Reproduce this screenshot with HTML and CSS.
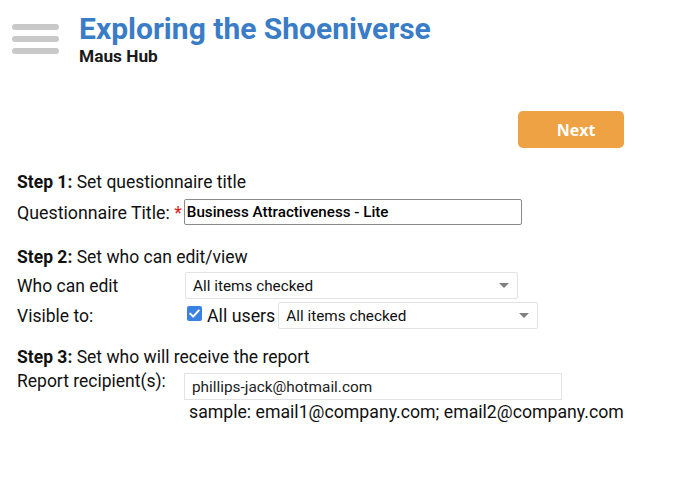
FILE: index.html
```html
<!DOCTYPE html>
<html>
<head>
<meta charset="utf-8">
<link rel="stylesheet" href="styles.css">
</head>
<body>
<header class="header">
  <div class="menu"><span></span><span></span><span></span></div>
  <div class="titles">
    <h1 class="title">Exploring the Shoeniverse</h1>
    <div class="subtitle">Maus Hub</div>
  </div>
</header>
<div class="actions"><button class="next">Next</button></div>
<section class="step step1">
  <div class="step-head"><b>Step 1:</b> Set questionnaire title</div>
  <div class="row">
    <label class="lbl-inline">Questionnaire Title: <span class="req">*</span></label>
    <input class="title-input" type="text" value="Business Attractiveness - Lite">
  </div>
</section>
<section class="step step2">
  <div class="step-head"><b>Step 2:</b> Set who can edit/view</div>
  <div class="row row-edit">
    <label class="lbl">Who can edit</label>
    <div class="select sel-edit"><span>All items checked</span><i class="caret"></i></div>
  </div>
  <div class="row row-vis">
    <label class="lbl">Visible to:</label>
    <span class="check"><svg width="15" height="15" viewBox="0 0 15 15"><rect width="15" height="15" rx="2" fill="#3b82e0"/><path d="M3.2 7.6 L6.2 10.6 L11.8 4.4" stroke="#fff" stroke-width="2" fill="none" stroke-linecap="round" stroke-linejoin="round"/></svg></span>
    <span class="allusers">All users</span>
    <div class="select sel-vis"><span>All items checked</span><i class="caret"></i></div>
  </div>
</section>
<section class="step step3">
  <div class="step-head"><b>Step 3:</b> Set who will receive the report</div>
  <div class="row row-email">
    <label class="lbl">Report recipient(s):</label>
    <div class="email">phillips-jack@hotmail.com</div>
  </div>
  <div class="sample">sample: email1@company.com; email2@company.com</div>
</section>
</body>
</html>
```
FILE: styles.css
```css
html, body { margin: 0; padding: 0; background: #fff; }
body { font-family: Roboto, "Liberation Sans", sans-serif; color: #111; font-size: 17.5px; }
.header { display: flex; align-items: flex-start; padding: 12px 0 0 12px; height: 64px; }
.menu { display: flex; flex-direction: column; gap: 6px; margin-top: 12px; }
.menu span { display: block; width: 47px; height: 6px; border-radius: 3px; background: #c9c9c9; }
.titles { margin-left: 20px; }
.title { margin: 0; font-size: 30px; line-height: 33px; font-weight: 700; color: #3a7dc6; }
.subtitle { font-size: 17.3px; font-weight: 700; line-height: 16px; color: #1a1a1a; margin-top: 3px; }
.actions { display: flex; justify-content: flex-end; padding-right: 64px; margin-top: 35px; }
.next { width: 106px; height: 37px; border: none; border-radius: 5px; background: #eea243; color: #fff; font-family: "Open Sans", sans-serif; font-weight: 700; font-size: 16px; padding: 0 0 0 10px; }
.step { padding-left: 17px; }
.step-head { line-height: 20px; }
.step-head b { font-weight: 700; }
.row { display: flex; align-items: center; }
.step1 { margin-top: 24px; }
.step1 .row { margin-top: 7px; }
.lbl-inline { white-space: pre; font-size: 17.8px; }
.req { color: #e02020; }
.title-input { box-sizing: border-box; width: 338px; height: 26px; margin-left: 2px; border: 1px solid #8a8a8a; border-radius: 2px; padding: 0 2px; font-family: Roboto, sans-serif; font-size: 15.2px; font-weight: 500; color: #000; }
.step2 { margin-top: 22px; }
.lbl { width: 168px; flex: none; }
.select { box-sizing: border-box; display: flex; align-items: center; justify-content: space-between; height: 27px; border: 1px solid #e3e3e3; border-radius: 2px; padding: 0 8px 0 7px; font-size: 15.3px; color: #111; }
.caret { width: 0; height: 0; border-left: 5px solid transparent; border-right: 5px solid transparent; border-top: 5px solid #808080; }
.row-edit { margin-top: 5px; }
.sel-edit { width: 333px; }
.row-vis { margin-top: 3px; }
.check { display: flex; margin-left: 2px; margin-top: -5px; }
.allusers { margin-left: 5px; font-size: 17.8px; }
.sel-vis { width: 260px; margin-left: 3px; }
.step3 { margin-top: 18px; }
.row-email { margin-top: 6px; align-items: flex-start; }
.email { box-sizing: border-box; width: 378px; height: 27px; border: 1px solid #e3e3e3; padding: 0 7px; display: flex; align-items: center; font-size: 15.35px; color: #222; margin-left: -1px; }
.row-email .lbl { margin-top: -2px; }
.sample { margin-left: 172px; margin-top: 2px; font-size: 17.7px; }
```
